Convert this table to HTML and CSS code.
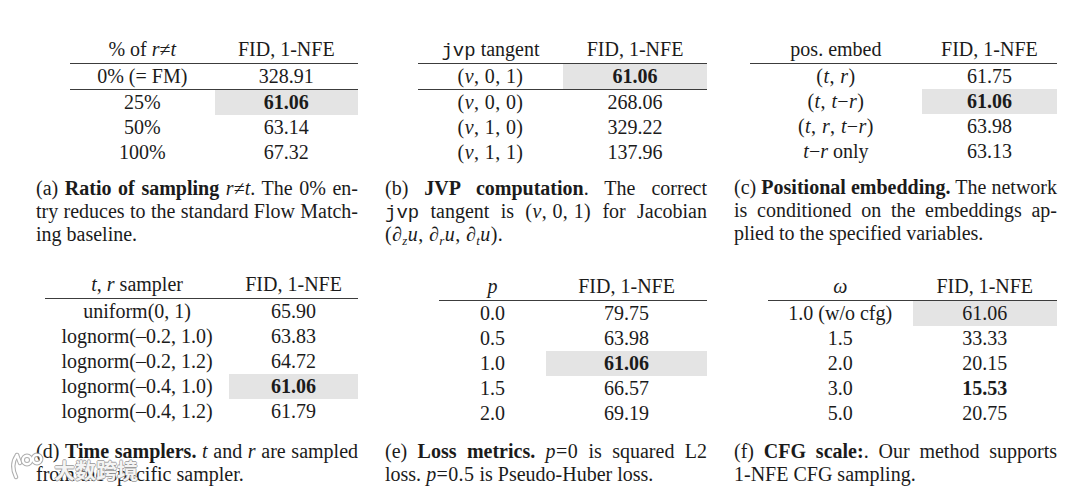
FILE: index.html
```html
<!DOCTYPE html>
<html lang="en">
<head>
<meta charset="utf-8">
<title>Ablation tables</title>
<link rel="stylesheet" href="styles.css">
</head>
<body>
<div class="grid">

  <section class="panel">
    <table class="tbl ta">
      <colgroup><col class="w128"><col class="w127"></colgroup>
      <thead><tr><th>% of <i>r</i>≠<i>t</i></th><th>FID, 1-NFE</th></tr></thead>
      <tbody>
        <tr><td>0% (= FM)</td><td>328.91</td></tr>
        <tr class="rule"><td>25%</td><td class="hl"><b>61.06</b></td></tr>
        <tr><td>50%</td><td>63.14</td></tr>
        <tr><td>100%</td><td>67.32</td></tr>
      </tbody>
    </table>
    <div class="cap">
      <div class="ln">(a) <b>Ratio of sampling</b> <i>r</i>≠<i>t</i>. The 0% en-</div>
      <div class="ln">try reduces to the standard Flow Match-</div>
      <div class="ln end">ing baseline.</div>
    </div>
  </section>

  <section class="panel">
    <table class="tbl tb">
      <colgroup><col class="w129"><col class="w128"></colgroup>
      <thead><tr><th><span class="mono">jvp</span> tangent</th><th>FID, 1-NFE</th></tr></thead>
      <tbody>
        <tr><td><span class="m">(<i>v</i>, 0, 1)</span></td><td class="hl"><b>61.06</b></td></tr>
        <tr class="rule"><td><span class="m">(<i>v</i>, 0, 0)</span></td><td>268.06</td></tr>
        <tr><td><span class="m">(<i>v</i>, 1, 0)</span></td><td>329.22</td></tr>
        <tr><td><span class="m">(<i>v</i>, 1, 1)</span></td><td>137.96</td></tr>
      </tbody>
    </table>
    <div class="cap">
      <div class="ln">(b) <b>JVP computation</b>. The correct</div>
      <div class="ln"><span class="mono">jvp</span> tangent is <span class="m">(<i>v</i>, 0, 1)</span> for Jacobian</div>
      <div class="ln end"><span class="m">(∂<sub><i>z</i></sub><i>u</i>, ∂<sub><i>r</i></sub><i>u</i>, ∂<sub><i>t</i></sub><i>u</i>)</span>.</div>
    </div>
  </section>

  <section class="panel">
    <table class="tbl tc">
      <colgroup><col class="w164"><col class="w129"></colgroup>
      <thead><tr><th>pos. embed</th><th>FID, 1-NFE</th></tr></thead>
      <tbody>
        <tr><td><span class="m">(<i>t</i>, <i>r</i>)</span></td><td>61.75</td></tr>
        <tr><td><span class="m">(<i>t</i>, <i>t</i>−<i>r</i>)</span></td><td class="hl"><b>61.06</b></td></tr>
        <tr><td><span class="m">(<i>t</i>, <i>r</i>, <i>t</i>−<i>r</i>)</span></td><td>63.98</td></tr>
        <tr><td><i>t</i>−<i>r</i> only</td><td>63.13</td></tr>
      </tbody>
    </table>
    <div class="cap">
      <div class="ln">(c) <b>Positional embedding.</b> The network</div>
      <div class="ln">is conditioned on the embeddings ap-</div>
      <div class="ln end">plied to the specified variables.</div>
    </div>
  </section>

  <section class="panel row2 pd">
    <table class="tbl td-">
      <colgroup><col class="w183"><col class="w128"></colgroup>
      <thead><tr><th><i>t</i>, <i>r</i> sampler</th><th>FID, 1-NFE</th></tr></thead>
      <tbody>
        <tr><td>uniform(0, 1)</td><td>65.90</td></tr>
        <tr><td>lognorm(–0.2, 1.0)</td><td>63.83</td></tr>
        <tr><td>lognorm(–0.2, 1.2)</td><td>64.72</td></tr>
        <tr><td>lognorm(–0.4, 1.0)</td><td class="hl"><b>61.06</b></td></tr>
        <tr><td>lognorm(–0.4, 1.2)</td><td>61.79</td></tr>
      </tbody>
    </table>
    <div class="cap">
      <div class="ln">(d) <b>Time samplers.</b> <i>t</i> and <i>r</i> are sampled</div>
      <div class="ln end">from the specific sampler.</div>
    </div>
  </section>

  <section class="panel row2">
    <table class="tbl te">
      <colgroup><col class="w86"><col class="w129"></colgroup>
      <thead><tr><th><i>p</i></th><th>FID, 1-NFE</th></tr></thead>
      <tbody>
        <tr><td>0.0</td><td>79.75</td></tr>
        <tr><td>0.5</td><td>63.98</td></tr>
        <tr><td>1.0</td><td class="hl"><b>61.06</b></td></tr>
        <tr><td>1.5</td><td>66.57</td></tr>
        <tr><td>2.0</td><td>69.19</td></tr>
      </tbody>
    </table>
    <div class="cap">
      <div class="ln">(e) <b>Loss metrics.</b> <span class="m"><i>p</i>=0</span> is squared L2</div>
      <div class="ln end">loss. <span class="m"><i>p</i>=0.5</span> is Pseudo-Huber loss.</div>
    </div>
  </section>

  <section class="panel row2">
    <table class="tbl tf">
      <colgroup><col class="w128"><col class="w128"></colgroup>
      <thead><tr><th><i>ω</i></th><th>FID, 1-NFE</th></tr></thead>
      <tbody>
        <tr><td>1.0 (w/o cfg)</td><td class="hl">61.06</td></tr>
        <tr><td>1.5</td><td>33.33</td></tr>
        <tr><td>2.0</td><td>20.15</td></tr>
        <tr><td>3.0</td><td><b>15.53</b></td></tr>
        <tr><td>5.0</td><td>20.75</td></tr>
      </tbody>
    </table>
    <div class="cap">
      <div class="ln">(f) <b>CFG scale:</b>. Our method supports</div>
      <div class="ln end">1-NFE CFG sampling.</div>
    </div>
  </section>

</div>

<div class="watermark">
  <svg class="wm-logo" width="40" height="30" viewBox="0 0 40 30">
    <g fill="none" stroke="#8c8c8c" stroke-width="4.4" stroke-linecap="round" opacity="0.7">
      <path d="M9 5 Q2 15 8 27"/>
      <path d="M9 5 L12 13"/>
      <circle cx="19" cy="10" r="4.2"/>
      <circle cx="29" cy="9" r="4.2"/>
    </g>
    <g fill="none" stroke="#ffffff" stroke-width="2.4" stroke-linecap="round">
      <path d="M9 5 Q2 15 8 27"/>
      <path d="M9 5 L12 13"/>
      <circle cx="19" cy="10" r="4.2"/>
      <circle cx="29" cy="9" r="4.2"/>
    </g>
  </svg>
  <span class="wm-text">大数跨境</span>
</div>
</body>
</html>
```

FILE: styles.css
```css
* {
  box-sizing: border-box;
  margin: 0;
  padding: 0;
}

html, body {
  background: #ffffff;
}

body {
  width: 1080px;
  height: 488px;
  overflow: hidden;
  position: relative;
  font-family: "Liberation Serif", "Times New Roman", serif;
  font-size: 20px;
  color: #1b1b1b;
}

.grid {
  display: grid;
  grid-template-columns: 322px 322px 323px;
  column-gap: 27px;
  row-gap: 28px;
  padding: 37px 0 0 36px;
  align-items: start;
}

.panel {
  display: flex;
  flex-direction: column;
}

.tbl {
  border-collapse: separate;
  border-spacing: 0;
  table-layout: fixed;
}

.tbl th,
.tbl td {
  padding: 0;
  text-align: center;
  white-space: nowrap;
  font-weight: normal;
  line-height: 25px;
  height: 25px;
}

.tbl th {
  line-height: 24px;
  height: 26px;
  padding-bottom: 2px;
  border-bottom: 1px solid #3c3c3c;
}

.tbl tr.rule td {
  border-top: 1px solid #3c3c3c;
}

.tbl .hl {
  background: #e4e4e4;
}

.w86 { width: 86px; }
.w127 { width: 127px; }
.w128 { width: 128px; }
.w129 { width: 129px; }
.w164 { width: 164px; }
.w183 { width: 183px; }

.ta { margin-left: 34px; }
.tb { margin-left: 33px; }
.tc { margin-left: 16px; }
.td- { margin-left: 9px; }
.te { margin-left: 54px; }
.tf { margin-left: 34px; }

.m {
  display: inline-block;
  white-space: nowrap;
  line-height: 1;
  word-spacing: 0;
  letter-spacing: 0.4px;
}

.mono {
  font-family: "Liberation Mono", "DejaVu Sans Mono", monospace;
  font-size: 19px;
  line-height: 1;
}

sub {
  font-size: 13px;
  vertical-align: -4px;
  line-height: 0;
}

.cap {
  margin-top: 12px;
  line-height: 23px;
}

.row2 .cap {
  margin-top: 13.5px;
}

.pd .tbl {
  margin-top: -2px;
}

.pd .cap {
  margin-top: 15.5px;
}

.ln {
  height: 23px;
  text-align: justify;
  text-align-last: justify;
  word-spacing: -2px;
}

.ln.end {
  text-align-last: left;
  word-spacing: 0;
}

.watermark {
  position: absolute;
  left: 8px;
  top: 446px;
  display: flex;
  align-items: center;
  gap: 6px;
}

.wm-text {
  font-family: "Noto Sans CJK SC", sans-serif;
  font-size: 21px;
  font-weight: 700;
  color: rgba(255, 255, 255, 0.92);
  text-shadow:
    0.7px 0 0 rgba(140, 140, 140, 0.75),
    -0.7px 0 0 rgba(140, 140, 140, 0.75),
    0 0.7px 0 rgba(140, 140, 140, 0.75),
    0 -0.7px 0 rgba(140, 140, 140, 0.75);
  margin-top: 8px;
}
```
